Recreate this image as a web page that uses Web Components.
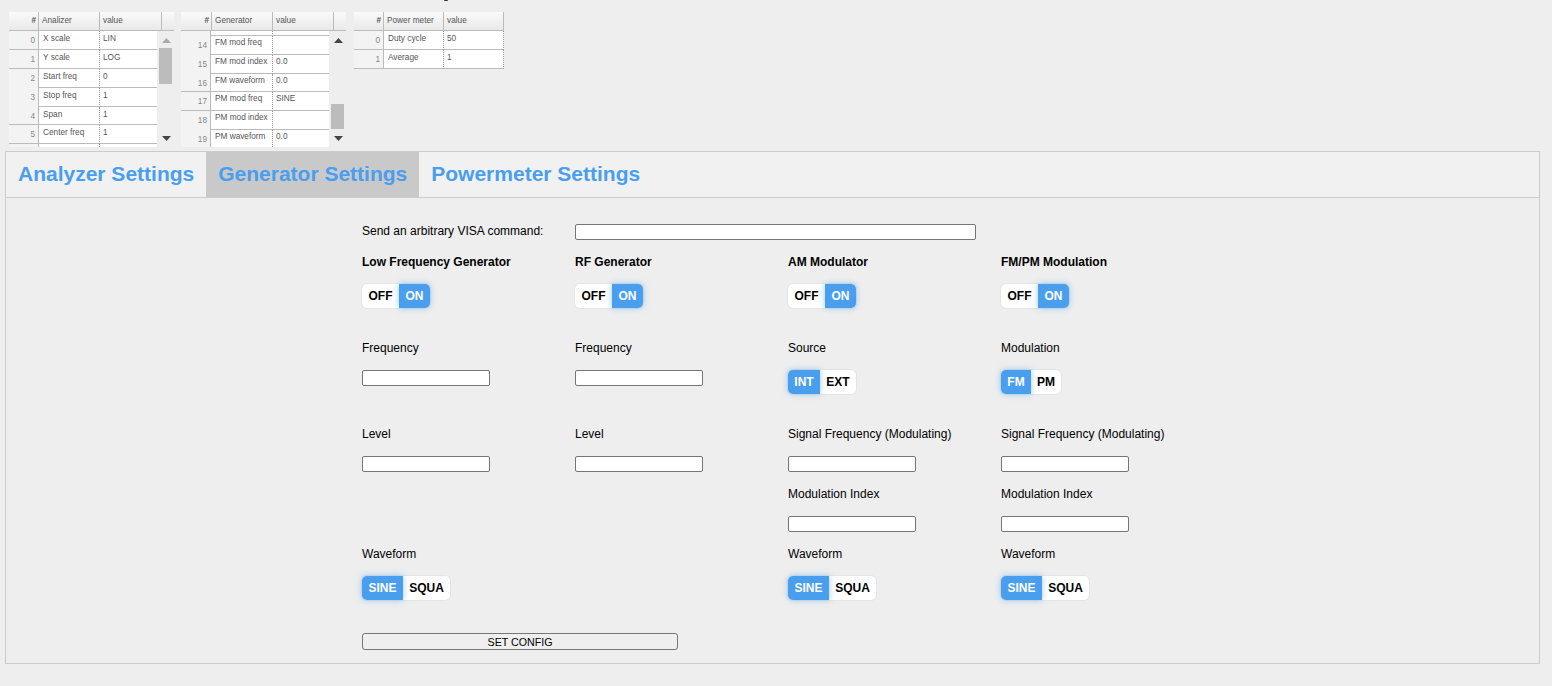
<!DOCTYPE html>
<html>
<head>
<meta charset="utf-8">
<title>Instrument settings</title>
<style>
  html, body { margin: 0; padding: 0; height: 686px; overflow: hidden; background: #eeeeee; }
  body { font-family: "Liberation Sans", Arial, sans-serif; color: #000; }
</style>
</head>
<body>
<app-page></app-page>

<script>
// small data table with a fake scrollbar, like the grids on top of the page
// a row is [number, name, value, height, number cell has its line]
class DataGrid extends HTMLElement {
  constructor() {
    super();
    this.attachShadow({ mode: "open" });
  }
  set data(data) {
    const cols = data.cols.map((c) => c + "px").join(" ");
    const headCols = data.headCols.map((c) => c + "px").join(" ");
    const rows = data.rows.map((r) => `
      <div class="row" style="grid-template-columns:${cols};height:${r[3] || 19}px">
        <div class="num ${r[4] === false ? "" : "line"}">${r[0]}</div><div class="name">${r[1]}</div><div class="val">${r[2]}</div>
      </div>`).join("");
    const bar = data.scroll ? `
      <div class="track">
        <svg class="up" width="9" height="5" viewBox="0 0 9 5"><path d="M4.5 0 L9 5 L0 5 Z" fill="${data.upColor}"/></svg>
        <div class="thumb" style="top:${data.thumbTop}px;height:${data.thumbH}px"></div>
        <svg class="down" width="9" height="5" viewBox="0 0 9 5"><path d="M0 0 L9 0 L4.5 5 Z" fill="#444"/></svg>
      </div>` : "";
    this.shadowRoot.innerHTML = `
      <style>
        :host { display: block; width: ${data.width}px; font-size: 8.25px; color: #555; }
        .head { display: grid; grid-template-columns: ${headCols} 1fr; height: 19px; line-height: 17px; box-sizing: border-box;
                background: linear-gradient(#fafafa, #e9e9e9); border-bottom: 1px solid #bbb; }
        .head div { border-right: 1px solid #bbb; padding-left: 3px; box-sizing: border-box; }
        .head .num { text-align: right; padding: 0 2px 0 0; font-weight: bold; }
        .head .last { border-right: 0; }
        .wrap { display: flex; height: ${data.bodyH}px; overflow: hidden; }
        .body { flex: 0 0 ${data.bodyW}px; overflow: hidden; }
        .row { display: grid; box-sizing: border-box; background: #fff; overflow: hidden; }
        .row div { padding: ${data.textTop}px 0 0 4px; box-sizing: border-box; overflow: hidden; white-space: nowrap; border-bottom: 1px solid #bbb; }
        .row .num { background: #f3f3f3; text-align: right; padding: 5px 3px 0 0; border-right: 1px solid #bbb; border-bottom: 0; color: #888; }
        .row .num.line { border-bottom: 1px solid #bbb; }
        .row .val { border-left: 1px dotted #999; padding-left: 3px; ${data.scroll ? "" : "border-right: 1px dotted #999;"} }
        .track { position: relative; flex: 1; }
        .thumb { position: absolute; left: 2px; right: 2px; background: #bcbcbc; }
        .up { position: absolute; top: 7px; left: 5px; }
        .down { position: absolute; top: 105px; left: 5px; }
      </style>
      <div class="head">
        <div class="num">#</div><div>${data.title}</div><div>value</div>${data.scroll ? '<div class="last"></div>' : ""}
      </div>
      <div class="wrap"><div class="body">${rows}</div>${bar}</div>`;
  }
}
customElements.define("data-grid", DataGrid);

// two-state switch, the active label gets the blue background
class ToggleSwitch extends HTMLElement {
  constructor() {
    super();
    const shadow = this.attachShadow({ mode: "open" });
    shadow.innerHTML = `
      <style>
        :host { display: inline-flex; height: 24px; background: #fff; border-radius: 5px;
                box-shadow: 0 0 0 1px #e4e4e4; font: bold 12px "Liberation Sans", Arial, sans-serif; line-height: 24px; vertical-align: top; }
        span { display: block; text-align: center; color: #000; }
        .on { background: #4a9eee; color: #fff; box-shadow: 0 0 6px rgba(74,158,238,.55); }
        .on:first-of-type { border-radius: 5px 0 0 5px; }
        .on:last-of-type { border-radius: 0 5px 5px 0; }
      </style>
      <span id="a"></span><span id="b"></span>`;
  }
  connectedCallback() {
    const a = this.shadowRoot.getElementById("a");
    const b = this.shadowRoot.getElementById("b");
    a.textContent = this.getAttribute("a");
    b.textContent = this.getAttribute("b");
    (this.getAttribute("active") === "a" ? a : b).className = "on";
    a.style.width = this.getAttribute("wa") + "px";
    b.style.width = this.getAttribute("wb") + "px";
  }
}
customElements.define("toggle-switch", ToggleSwitch);

class FieldLabel extends HTMLElement {
  constructor() {
    super();
    this.attachShadow({ mode: "open" }).innerHTML = `
      <style>:host { display: block; font-size: 12px; white-space: nowrap; }
      :host([strong]) { font-weight: bold; }</style><slot></slot>`;
  }
}
customElements.define("field-label", FieldLabel);

class TextField extends HTMLElement {
  constructor() {
    super();
    this.attachShadow({ mode: "open" }).innerHTML = `
      <style>
        :host { display: block; width: 128px; height: 16px; }
        :host([wide]) { width: 401px; }
        input { display: block; width: 100%; height: 100%; box-sizing: border-box; margin: 0; padding: 0 2px;
                border: 1px solid #767676; border-radius: 2px; background: #fff; }
      </style><input type="text">`;
  }
}
customElements.define("text-field", TextField);

class TabBar extends HTMLElement {
  constructor() {
    super();
    this.attachShadow({ mode: "open" }).innerHTML = `
      <style>
        :host { display: flex; height: 45px; border-bottom: 1px solid #ccc; background: #f1f1f1;
                font: bold 21px "Liberation Sans", Arial, sans-serif; color: #4a9eee; line-height: 44px; }
        div { padding: 0 12px; }
        .sel { background: #c9c9c9; }
      </style>
      <div>Analyzer Settings</div><div class="sel">Generator Settings</div><div>Powermeter Settings</div>`;
  }
}
customElements.define("tab-bar", TabBar);

class GeneratorForm extends HTMLElement {
  constructor() {
    super();
    this.attachShadow({ mode: "open" }).innerHTML = `
      <style>
        :host { display: grid; margin-left: 356px; padding-top: 18px;
                grid-template-columns: repeat(4, 213px);
                grid-template-rows: 32px 27px 42px 16px 30px 32px 24px 30px 30px 30px 30px 30px 38px 26px 17px;
                align-items: center; }
        .wide { grid-column: 2 / span 3; }
        .visa { margin-bottom: 3px; }
        .btn { grid-column: 1 / span 2; grid-row: 15; width: 316px; height: 17px; box-sizing: border-box; margin: 0; padding: 0;
               border: 1px solid #767676; border-radius: 3px; background: #efefef; font: 10.67px "Liberation Sans", Arial, sans-serif; color: #000; }
        .r1 { grid-row: 1; } .r2 { grid-row: 2; } .r3 { grid-row: 3; } .r5 { grid-row: 5; }
        .r6 { grid-row: 6; align-self: start; margin-top: 7px; }
        .r8 { grid-row: 8; } .r9 { grid-row: 9; } .r10 { grid-row: 10; } .r11 { grid-row: 11; } .r12 { grid-row: 12; } .r13 { grid-row: 13; }
        .c1 { grid-column: 1; } .c2 { grid-column: 2; } .c3 { grid-column: 3; } .c4 { grid-column: 4; }
      </style>
      <field-label class="r1 c1 visa">Send an arbitrary VISA command:</field-label>
      <text-field class="r1 wide" wide></text-field>

      <field-label class="r2 c1" strong>Low Frequency Generator</field-label>
      <field-label class="r2 c2" strong>RF Generator</field-label>
      <field-label class="r2 c3" strong>AM Modulator</field-label>
      <field-label class="r2 c4" strong>FM/PM Modulation</field-label>

      <div class="r3 c1"><toggle-switch a="OFF" b="ON" active="b" wa="37" wb="31"></toggle-switch></div>
      <div class="r3 c2"><toggle-switch a="OFF" b="ON" active="b" wa="37" wb="31"></toggle-switch></div>
      <div class="r3 c3"><toggle-switch a="OFF" b="ON" active="b" wa="37" wb="31"></toggle-switch></div>
      <div class="r3 c4"><toggle-switch a="OFF" b="ON" active="b" wa="37" wb="31"></toggle-switch></div>

      <field-label class="r5 c1">Frequency</field-label>
      <field-label class="r5 c2">Frequency</field-label>
      <field-label class="r5 c3">Source</field-label>
      <field-label class="r5 c4">Modulation</field-label>

      <text-field class="r6 c1"></text-field>
      <text-field class="r6 c2"></text-field>
      <div class="r6 c3"><toggle-switch a="INT" b="EXT" active="a" wa="32" wb="36"></toggle-switch></div>
      <div class="r6 c4"><toggle-switch a="FM" b="PM" active="a" wa="30" wb="30"></toggle-switch></div>

      <field-label class="r8 c1">Level</field-label>
      <field-label class="r8 c2">Level</field-label>
      <field-label class="r8 c3">Signal Frequency (Modulating)</field-label>
      <field-label class="r8 c4">Signal Frequency (Modulating)</field-label>

      <text-field class="r9 c1"></text-field>
      <text-field class="r9 c2"></text-field>
      <text-field class="r9 c3"></text-field>
      <text-field class="r9 c4"></text-field>

      <field-label class="r10 c3">Modulation Index</field-label>
      <field-label class="r10 c4">Modulation Index</field-label>
      <text-field class="r11 c3"></text-field>
      <text-field class="r11 c4"></text-field>

      <field-label class="r12 c1">Waveform</field-label>
      <field-label class="r12 c3">Waveform</field-label>
      <field-label class="r12 c4">Waveform</field-label>

      <div class="r13 c1"><toggle-switch a="SINE" b="SQUA" active="a" wa="41" wb="47"></toggle-switch></div>
      <div class="r13 c3"><toggle-switch a="SINE" b="SQUA" active="a" wa="41" wb="47"></toggle-switch></div>
      <div class="r13 c4"><toggle-switch a="SINE" b="SQUA" active="a" wa="41" wb="47"></toggle-switch></div>

      <button class="btn">SET CONFIG</button>`;
  }
}
customElements.define("generator-form", GeneratorForm);

class AppPage extends HTMLElement {
  constructor() {
    super();
    this.attachShadow({ mode: "open" }).innerHTML = `
      <style>
        :host { display: block; padding: 12px 12px 0 5px; font-family: "Liberation Sans", Arial, sans-serif; }
        .grids { display: flex; align-items: flex-start; height: 139px; padding-left: 4px; }
        #g1 { margin-right: 7px; }
        #g2 { margin-right: 8px; }
        .panel { border: 1px solid #ccc; width: 1535px; height: 513px; box-sizing: border-box; }
        /* tail of a letter cut off by the top of the window */
        .cut { position: absolute; left: 444px; top: 0; width: 4px; height: 1px; background: #333; border-radius: 0 0 2px 2px; }
      </style>
      <div class="cut"></div>
      <div class="grids">
        <data-grid id="g1"></data-grid>
        <data-grid id="g2"></data-grid>
        <data-grid id="g3"></data-grid>
      </div>
      <div class="panel">
        <tab-bar></tab-bar>
        <generator-form></generator-form>
      </div>`;

    const $ = (id) => this.shadowRoot.getElementById(id);
    $("g1").data = {
      title: "Analizer", width: 165, cols: [30, 60, 58], headCols: [30, 61, 62], bodyW: 148, bodyH: 116, scroll: true, textTop: 3,
      thumbTop: 17, thumbH: 36, upColor: "#aaa",
      rows: [
        [0, "X scale", "LIN"],
        [1, "Y scale", "LOG"],
        [2, "Start freq", "0", 19, false],
        [3, "Stop freq", "1", 19, false],
        [4, "Span", "1", 18],
        [5, "Center freq", "1"],
        ["", "", ""],
      ],
    };
    $("g2").data = {
      title: "Generator", width: 165, cols: [30, 61, 57], headCols: [31, 61, 61], bodyW: 148, bodyH: 116, scroll: true, textTop: 2,
      thumbTop: 73, thumbH: 25, upColor: "#444",
      rows: [
        ["", "", "", 5, false],
        [14, "FM mod freq", "", 19, false],
        [15, "FM mod index", "0.0", 19, false],
        [16, "FM waveform", "0.0", 18],
        [17, "PM mod freq", "SINE"],
        [18, "PM mod index", "", 19, false],
        [19, "PM waveform", "0.0"],
      ],
    };
    $("g3").data = {
      title: "Power meter", width: 150, cols: [30, 59, 61], headCols: [30, 60, 60], bodyW: 150, bodyH: 38, scroll: false, textTop: 3,
      rows: [[0, "Duty cycle", "50"], [1, "Average", "1"]],
    };
  }
}
customElements.define("app-page", AppPage);
</script>
</body>
</html>
